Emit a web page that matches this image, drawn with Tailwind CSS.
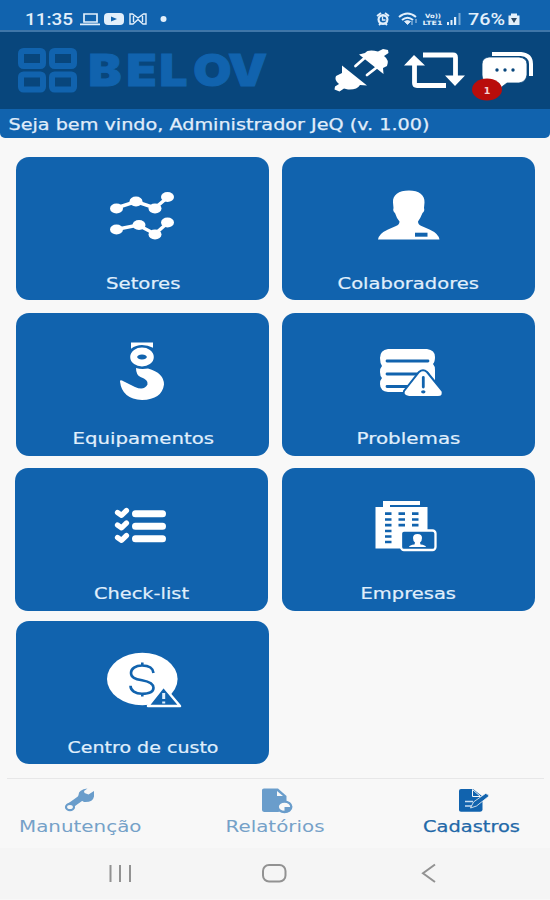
<!DOCTYPE html>
<html lang="pt-BR">
<head>
<meta charset="utf-8">
<meta name="viewport" content="width=device-width, initial-scale=1">
<title>Belov</title>
<script src="https://cdn.jsdelivr.net/npm/@tailwindcss/browser@4"></script>
</head>
<body class="w-[550px] h-[900px] overflow-hidden bg-[#f8f8f8] font-['DejaVu_Sans',sans-serif]">
<div class="flex flex-col w-[550px] h-[900px]">

  <!-- Status bar -->
  <div class="h-8 shrink-0 bg-[#1163ae] border-b-2 border-[#3f76a8] flex justify-between text-[#e2effb]">
    <svg class="w-[200px] h-[30px]" viewBox="0 0 200 30" fill="currentColor">
      <text x="25" y="24.500" font-family="Roboto, sans-serif" font-weight="500" font-size="16" textLength="48" lengthAdjust="spacingAndGlyphs">11:35</text>
      <path d="M84 14h13v8H84zM80 24.300h20" fill="none" stroke="currentColor" stroke-width="1.700"/>
      <rect x="104" y="13" width="20" height="12" rx="4"/>
      <path d="M111 16.500v5l6-2.500z" fill="#1163ae"/>
      <path d="M130 24V14h2.500l5.500 4 5.500-4h2.500v10h-3l-5-4.500-5 4.500zM133.500 16v6M142.500 16v6" fill="none" stroke="currentColor" stroke-width="1.400"/>
      <circle cx="163.500" cy="19" r="3"/>
    </svg>
    <svg class="w-[200px] h-[30px]" viewBox="350 0 200 30" fill="currentColor">
      <circle cx="383" cy="19.500" r="5.500"/>
      <path d="M377 16l4-3M389 16l-4-3M379 25l2-2M387 25l-2-2" stroke="currentColor" stroke-width="1.800"/>
      <ellipse cx="383" cy="19.500" rx="3.300" ry="3" fill="#1163ae"/>
      <path d="M382.500 16.500v3.500h3" fill="none" stroke="currentColor" stroke-width="1.300"/>
      <path d="M399 17q8.500-7 17 0M402 20q5.500-4.500 11 0" fill="none" stroke="currentColor" stroke-width="2"/>
      <path d="M404.500 21.500q3-2 6 0l-3 3zM412 21v4M416 19v4" stroke="currentColor" stroke-width=".8"/>
      <text x="425" y="18" font-size="6" font-weight="700" textLength="16" lengthAdjust="spacingAndGlyphs">Vo))</text>
      <text x="422.500" y="25.200" font-size="6" font-weight="700" textLength="20" lengthAdjust="spacingAndGlyphs">LTE1</text>
      <path d="M447 22h2v3h-2zM450.500 20h2v5h-2zM454 17h2.200v8H454z"/>
      <path d="M458.500 13h2v12h-2z" opacity=".5"/>
      <text x="468" y="24.500" font-family="Roboto, sans-serif" font-size="16" font-weight="500" textLength="37" lengthAdjust="spacingAndGlyphs">76%</text>
      <path d="M511 13.500h6v2h2.500V25h-11v-9.500h2.500z"/>
      <path d="M511 18h6l-3 5z" fill="#2c4a66"/>
    </svg>
  </div>

  <!-- Brand header -->
  <header class="h-[77px] shrink-0 bg-[#08467c] flex justify-between">
    <svg class="w-[280px] h-[77px]" viewBox="0 32 280 77">
      <g fill="none" stroke="#1163ae" stroke-width="6">
        <rect x="21" y="51" width="22" height="15" rx="2.500"/>
        <rect x="52" y="51" width="22" height="15" rx="2.500"/>
        <rect x="21" y="74.500" width="22" height="15" rx="2.500"/>
        <rect x="52" y="74.500" width="22" height="15" rx="2.500"/>
      </g>
      <text transform="translate(88.500 86.300) scale(1.120 1)" x="0 34 63.500 93.500 124.500" y="0" font-family="Inter, 'DejaVu Sans', sans-serif" font-weight="900" font-size="44" fill="#1163ae" stroke="#1163ae" stroke-width="1">BELOV</text>
    </svg>
    <svg class="w-[230px] h-[77px]" viewBox="320 32 230 77" fill="#fff">
      <!-- Plug and socket -->
      <path d="M359 54.500l6-1.500q3-4 13-1.500l5-2.500 5 1 .5 3-4.500 3q5.500 4 3 10l-4 2 .5 6z"/>
      <path d="M364 58.500l-8.500 7.500M376 68l-9 7" stroke="#fff" stroke-width="2.800" stroke-linecap="round"/>
      <path d="M342 65.500l25 20-7-.5q-3 5-12 4.500l-4-1-4.500 3-5-2 .5-3 4-2.500q-5-4-3-8l6-3z"/>
      <!-- Repeat arrows -->
      <path d="M423 55h30q2.500 0 2.500 2.500V78M414.500 62v21q0 2.500 2.500 2.500h29" fill="none" stroke="#fff" stroke-width="4.800"/>
      <path d="M404 65.500l10-10.500 11 10.500zM445 75.500h20l-10 10.500z"/>
      <!-- Chat -->
      <path d="M492 54h29q10 1 10 10v12" fill="none" stroke="#fff" stroke-width="4"/>
      <path d="M489 57h30q8 1 8 7v11q-1 7-8 8h-12l-8 6v-6h-10q-7-1-7-8V64q0-6 7-7z" stroke="#08467c" stroke-width=".8"/>
      <g fill="#08467c"><circle cx="497" cy="70" r="1.700"/><circle cx="505" cy="70" r="1.700"/><circle cx="513" cy="70" r="1.700"/></g>
      <ellipse cx="487" cy="89.500" rx="15" ry="11" fill="#b90d0b"/>
      <text x="487" y="93.500" font-size="9.500" font-weight="700" text-anchor="middle" fill="#f5d2d2">1</text>
    </svg>
  </header>

  <!-- Welcome strip -->
  <div class="h-[29px] shrink-0 bg-[#1163ae] rounded-b-[5px]">
    <svg class="w-[550px] h-[29px]" viewBox="0 109 550 29">
      <text x="8.500" y="129.500" font-size="16" fill="#e0edfa" stroke="#e0edfa" stroke-width=".25" textLength="421" lengthAdjust="spacingAndGlyphs">Seja bem vindo, Administrador JeQ (v. 1.00)</text>
    </svg>
  </div>

  <!-- Menu tiles -->
  <main class="h-[640px] shrink-0 pt-[19px] pl-4 flex flex-col text-[#e0effc]">
    <div class="flex gap-[13px] mb-[13px]">
      <div class="w-[253px] h-[143px] rounded-[13px] bg-[#1163ae]">
        <svg class="w-full h-full" viewBox="16 157 253 143">
          <path d="M116 208l20-6.500 19 6.500 13-11M116 229.500l22-4.500 17 9 13-11.500" fill="none" stroke="#fff" stroke-width="3.500"/>
          <g fill="#fff">
            <ellipse cx="116.500" cy="208.500" rx="6.500" ry="5"/><ellipse cx="136" cy="201.500" rx="6.500" ry="5"/><ellipse cx="155" cy="208.500" rx="6.500" ry="5"/><ellipse cx="167.500" cy="197" rx="6.500" ry="5"/>
            <ellipse cx="116.500" cy="229.500" rx="6.500" ry="5"/><ellipse cx="139" cy="225" rx="6.500" ry="5"/><ellipse cx="155" cy="234.500" rx="6.500" ry="5"/><ellipse cx="167.500" cy="222.500" rx="6.500" ry="5"/>
          </g>
          <text x="106" y="289" font-size="16.500" fill="currentColor" stroke="currentColor" stroke-width=".2" textLength="74.500" lengthAdjust="spacingAndGlyphs">Setores</text>
        </svg>
      </div>
      <div class="w-[253px] h-[143px] rounded-[13px] bg-[#1163ae]">
        <svg class="w-full h-full" viewBox="282 157 253 143">
          <path d="M409 190.500c10 0 16 4.500 15.500 12l-.5 5.500q1 3-1.500 5-2 5-4.500 8.500 0 3 3.500 4.500l8 3.500q9 4 10 10h-61.500q1-6 10-10l8-3.500q3.500-1.500 3.500-4.500-3-3.500-4.500-8.500-2.500-2-1.500-5l-.5-5.500c-.5-7.500 5.500-12 16-12z" fill="#fff"/>
          <path d="M415 232.700h12.500v4H415z" fill="#1163ae"/>
          <text x="337.500" y="289" font-size="16.500" fill="currentColor" stroke="currentColor" stroke-width=".2" textLength="141.500" lengthAdjust="spacingAndGlyphs">Colaboradores</text>
        </svg>
      </div>
    </div>

    <div class="flex gap-[13px] mb-3">
      <div class="w-[253px] h-[143px] rounded-[13px] bg-[#1163ae]">
        <svg class="w-full h-full" viewBox="16 313 253 143">
          <path d="M131 342.500h22v5.200q-5-2.700-11-2.700t-11 3.700z" fill="#fff"/>
          <ellipse cx="142" cy="357" rx="8.300" ry="6" fill="none" stroke="#fff" stroke-width="7"/>
          <path d="M136 368q5 1.500 12 .5 16 4.500 16 16-2 15-22 15.500-20-1-22-18.500 0-2 2-1l13 6.500q9 4 12.500-2.500 1-5-7-7.500-4.500-2-4.500-9z" fill="#fff"/>
          <text x="72.500" y="444" font-size="16.500" fill="currentColor" stroke="currentColor" stroke-width=".2" textLength="141.500" lengthAdjust="spacingAndGlyphs">Equipamentos</text>
        </svg>
      </div>
      <div class="w-[253px] h-[143px] rounded-[13px] bg-[#1163ae]">
        <svg class="w-full h-full" viewBox="282 313 253 143">
          <path d="M388 349h39q8 1 8 8 0 5-2 7 2 2 2 6v16h-24v6h-23q-8-1-8-8 0-4 2-6-2-2-2-6t2-6q-2-3-2-8 0-8 8-9z" fill="#fff"/>
          <path d="M387 361h41M387 374h41M387 386.500h25" stroke="#1163ae" stroke-width="2.800" stroke-linecap="round"/>
          <path d="M419 372q4-3.500 8 0l15.500 19q1.500 6-4.500 6h-29q-7-1-5-6z" fill="#fff" stroke="#1163ae" stroke-width="2"/>
          <path d="M423.300 377.500v9.500" stroke="#1163ae" stroke-width="2.800" stroke-linecap="round"/>
          <ellipse cx="423.300" cy="391.800" rx="2.200" ry="1.600" fill="#1163ae"/>
          <text x="356.500" y="444" font-size="16.500" fill="currentColor" stroke="currentColor" stroke-width=".2" textLength="104" lengthAdjust="spacingAndGlyphs">Problemas</text>
        </svg>
      </div>
    </div>

    <div class="-ml-px flex gap-3.5 mb-2.5">
      <div class="w-[253px] h-[143px] rounded-[13px] bg-[#1163ae]">
        <svg class="w-full h-full" viewBox="15 468 253 143" fill="none" stroke="#fff" stroke-linecap="round" stroke-linejoin="round">
          <path d="M117.500 512.500l4 2.800 5-4.800M117.500 525l4 2.800 5-4.800M117.500 537.500l4 2.800 5-4.800" stroke-width="5.200"/>
          <path d="M135.500 513.700h27M135.500 526.200h27M135.500 538.700h27" stroke-width="7"/>
          <text x="94" y="599" font-size="16.500" stroke="currentColor" stroke-width=".2" fill="currentColor" textLength="95" lengthAdjust="spacingAndGlyphs">Check-list</text>
        </svg>
      </div>
      <div class="w-[253px] h-[143px] rounded-[13px] bg-[#1163ae]">
        <svg class="w-full h-full" viewBox="282 468 253 143">
          <path d="M383 501h37v4h-30v2h37.500v41.500h-52V507h7.500z" fill="#fff"/>
          <path d="M385 513.700h6.500M398.500 513.700h6.500M412 513.700h6.500M385 519.500h6.500M398.500 519.500h6.500M412 519.500h6.500M385 525.200h6.500M398.500 525.200h6.500M412 525.200h6.500M385 531h6.500M385 536.500h6.500M385 542h6.500" stroke="#1163ae" stroke-width="2.700"/>
          <rect x="401" y="530.500" width="34.500" height="19.500" rx="3" fill="#1163ae" stroke="#fff" stroke-width="2.300"/>
          <path d="M417.500 534q4.500 0 4.500 4 0 3-2 4.500l.5 2q5 .5 5.500 2.500h-17q.5-2 5.500-2.500l.5-2q-2-1.500-2-4.500 0-4 4.500-4z" fill="#fff"/>
          <text x="360.500" y="599" font-size="16.500" fill="currentColor" stroke="currentColor" stroke-width=".2" textLength="95.500" lengthAdjust="spacingAndGlyphs">Empresas</text>
        </svg>
      </div>
    </div>

    <div class="w-[253px] h-[143px] rounded-[13px] bg-[#1163ae]">
      <svg class="w-full h-full" viewBox="16 621 253 143">
        <ellipse cx="142.300" cy="679" rx="35.300" ry="26.300" fill="#fff"/>
        <path d="M153.500 673c-.5-5-5-7.500-11.500-7.500s-11 3-11 7.500 4 6 11 7.300 11.500 3 11.500 7.500-5 6-11.500 6-11.500-3-11.500-8M142.300 662.500v4M142.300 692.500v4" fill="none" stroke="#1163ae" stroke-width="2.600"/>
        <path d="M163.500 686.500l16.500 19.500h-32z" fill="#1163ae" stroke="#fff" stroke-width="2.500" stroke-linejoin="round"/>
        <path d="M163.700 693v6M163.700 701.500v2" stroke="#e0effc" stroke-width="3"/>
        <text x="67.500" y="752.500" font-size="16.500" fill="currentColor" stroke="currentColor" stroke-width=".2" textLength="151" lengthAdjust="spacingAndGlyphs">Centro de custo</text>
      </svg>
    </div>
  </main>

  <!-- Bottom tabs -->
  <nav class="h-[70px] shrink-0 px-[7px] flex flex-col">
    <div class="h-px w-[537px] bg-[#e7e7e8]"></div>
    <div class="flex h-[69px]">
      <svg class="w-[179px] h-[69px]" viewBox="7 779 179 69">
        <path d="M70.500 805.500l14-10" stroke="#6a9dcb" stroke-width="6"/>
        <ellipse cx="70" cy="807" rx="4" ry="3.200" fill="#f8f8f8" stroke="#6a9dcb" stroke-width="2.200"/>
        <path d="M87.500 788.500q-9 1-9 6.500l-1 3 6.500 4q9 .5 10-5.500v-5.500l-5.500 3.500-4-1.500-.5-2z" fill="#6a9dcb"/>
        <text x="19" y="832" font-size="16.500" fill="#75a1c8" textLength="122.500" lengthAdjust="spacingAndGlyphs">Manutenção</text>
      </svg>
      <svg class="w-[179px] h-[69px]" viewBox="186 779 179 69">
        <path d="M264 788.500h14l8.500 7.500v8l-8 8H264q-2-.5-2-2v-20q0-1.500 2-1.500z" fill="#6a9dcb"/>
        <path d="M277 791v5h6z" fill="#f8f8f8"/>
        <ellipse cx="284.500" cy="806.800" rx="6.800" ry="5.200" fill="#f8f8f8" stroke="#6a9dcb" stroke-width="2.400"/>
        <path d="M284.500 807v5.500q7-.5 7.500-5.500z" fill="#6a9dcb"/>
        <text x="225.500" y="832" font-size="16.500" fill="#75a1c8" textLength="99" lengthAdjust="spacingAndGlyphs">Relatórios</text>
      </svg>
      <svg class="w-[178px] h-[69px]" viewBox="365 779 178 69">
        <path d="M461 789h12l9.500 7.500V810q-.5 1.700-2.500 1.700h-19q-2 0-2-1.700v-19q0-2 2-2z" fill="#1163ae"/>
        <path d="M472.500 789.500v7h8z" fill="#1163ae" stroke="#f8f8f8" stroke-width="1"/>
        <path d="M465 801.500h8M465 806h8" stroke="#c5dcf1" stroke-width="1.500"/>
        <path d="M470.500 808l3-6 12-8.500q4 .5 3 3l-12 9.500z" fill="#1163ae" stroke="#f8f8f8" stroke-width=".8"/>
        <text x="423" y="832" font-size="16.500" fill="#2268a8" stroke="#2268a8" stroke-width=".25" textLength="97" lengthAdjust="spacingAndGlyphs">Cadastros</text>
      </svg>
    </div>
  </nav>

  <!-- System navigation -->
  <div class="h-[51px] shrink-0 bg-[#f5f5f5]">
    <svg class="w-[550px] h-[51px]" viewBox="0 849 550 51" fill="none" stroke="#929292" stroke-width="2">
      <path d="M110.500 866v17M120 866v17M130 866v17"/>
      <rect x="263" y="866" width="22.500" height="16.500" rx="6"/>
      <path d="M435 865.500l-12 8.800 12 8.700"/>
    </svg>
  </div>
</div>
</body>
</html>
